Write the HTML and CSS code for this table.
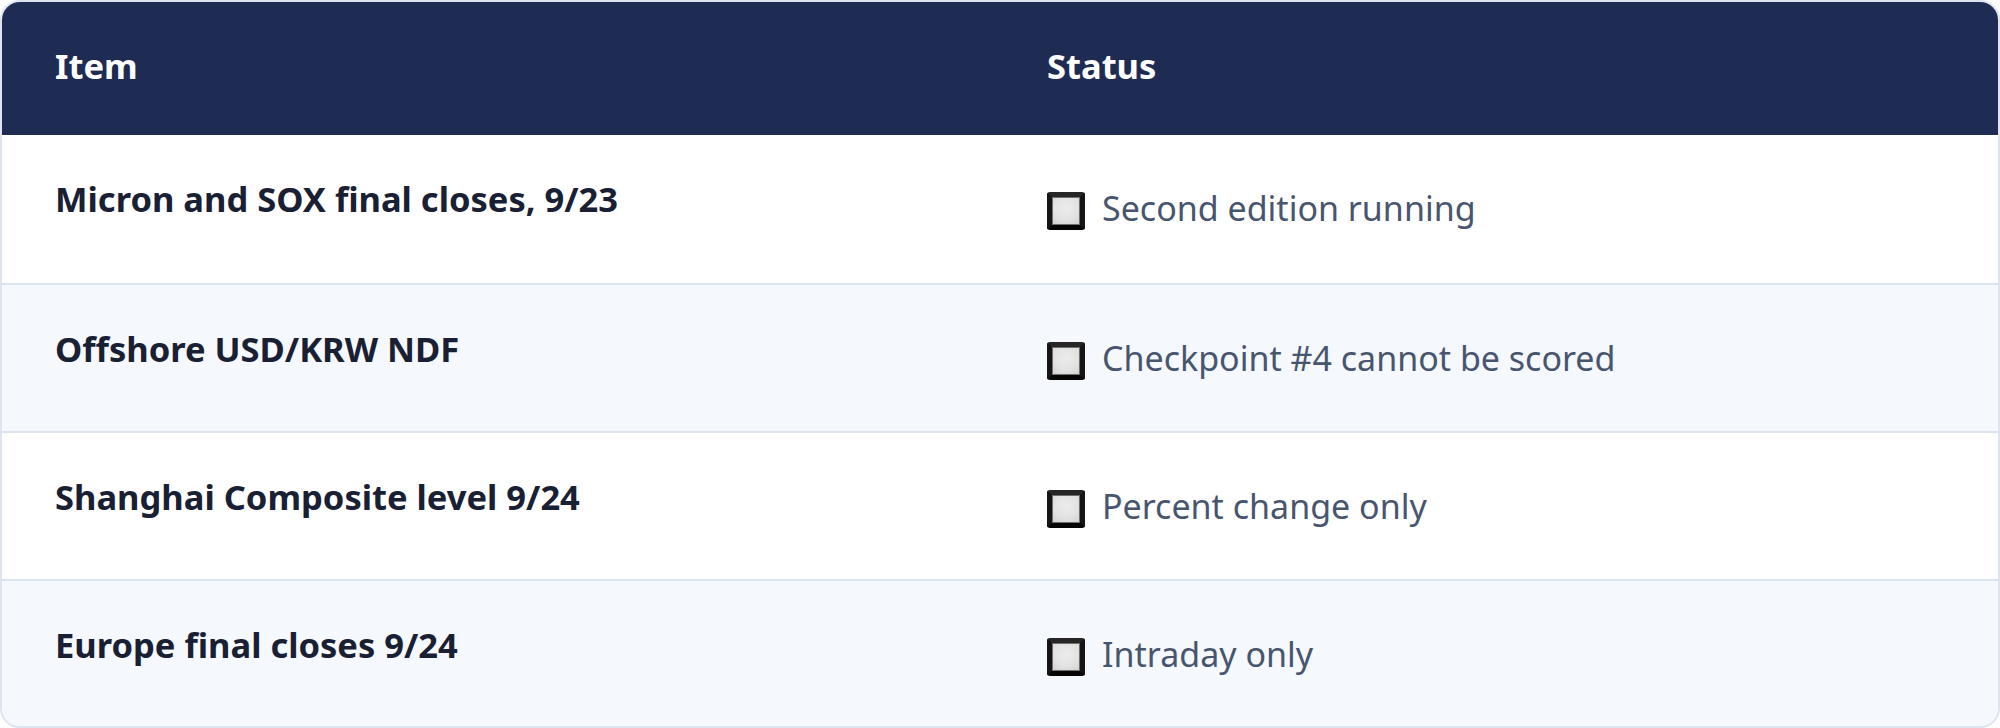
FILE: index.html
```html
<!DOCTYPE html>
<html>
<head>
<meta charset="utf-8">
<link rel="stylesheet" href="styles.css">
</head>
<body>
<div class="card">
  <div class="row head">
    <div class="cell">Item</div>
    <div class="cell">Status</div>
  </div>
  <div class="row first">
    <div class="cell item">Micron and SOX final closes, 9/23</div>
    <div class="cell status"><span class="box"></span><span>Second edition running</span></div>
  </div>
  <div class="row alt">
    <div class="cell item">Offshore USD/KRW NDF</div>
    <div class="cell status"><span class="box"></span><span>Checkpoint #4 cannot be scored</span></div>
  </div>
  <div class="row">
    <div class="cell item">Shanghai Composite level 9/24</div>
    <div class="cell status"><span class="box"></span><span>Percent change only</span></div>
  </div>
  <div class="row alt last">
    <div class="cell item">Europe final closes 9/24</div>
    <div class="cell status"><span class="box"></span><span>Intraday only</span></div>
  </div>
</div>
</body>
</html>
```
FILE: styles.css
```css
html, body {
  margin: 0;
  padding: 0;
  background: #ffffff;
}
body {
  font-family: "Noto Sans", "Open Sans", sans-serif;
}
.card {
  border: 2px solid #dde4f0;
  border-radius: 20px;
  overflow: hidden;
  background: #ffffff;
}
.row {
  display: grid;
  grid-template-columns: 992px 1fr;
  align-items: start;
  height: 148px;
  border-top: 2px solid #dde4f0;
  box-sizing: border-box;
}
.row.first {
  border-top: none;
}
.row.last {
  height: 147px;
}
.row.alt {
  background: #f5f8fd;
}
.row.head {
  background: #1e2b53;
  color: #ffffff;
  height: 133px;
  border-top: none;
}
.cell {
  padding: 0 53px;
  line-height: 48px;
}
.head .cell {
  font-weight: 700;
  font-size: 34.5px;
  padding-top: 40px;
}
.item {
  font-weight: 700;
  font-size: 34.5px;
  color: #1a2033;
  padding-top: 40px;
}
.status {
  display: flex;
  align-items: center;
  gap: 17px;
  font-size: 34px;
  color: #48556f;
  padding-top: 49px;
  height: 48px;
}
.box {
  width: 38px;
  height: 38px;
  margin-top: 5px;
  box-sizing: border-box;
  border: 5px solid #050505;
  border-top-color: #262626;
  border-left-color: #151515;
  border-right-color: #151515;
  border-radius: 3px;
  background: radial-gradient(circle at 50% 40%, #ececec 0%, #e2e2e2 55%, #cfcfcf 100%);
  box-shadow: inset 0 0 0 1px #6e6e6e;
  flex: none;
}
```
